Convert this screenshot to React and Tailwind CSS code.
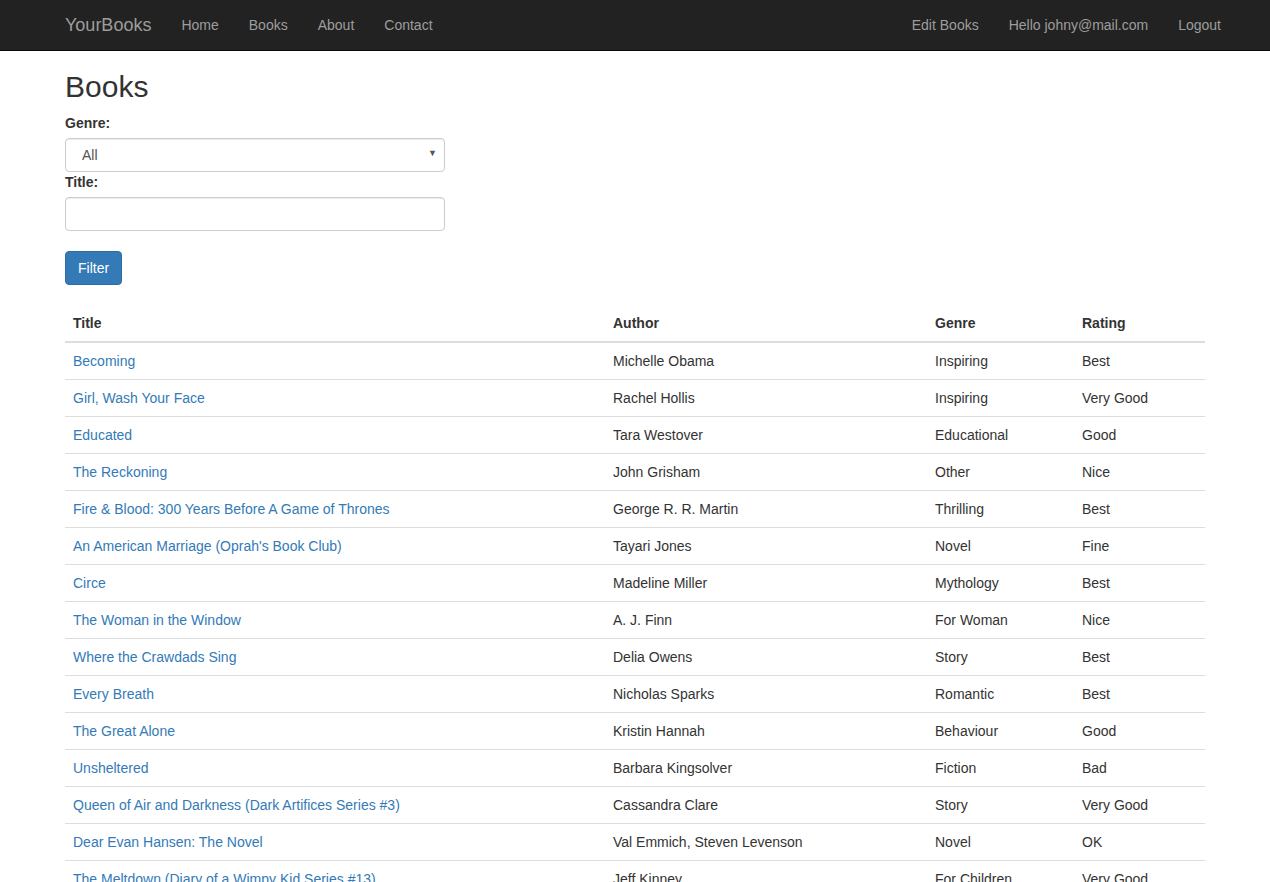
import React from 'react';

const books = [
  ['Becoming', 'Michelle Obama', 'Inspiring', 'Best'],
  ['Girl, Wash Your Face', 'Rachel Hollis', 'Inspiring', 'Very Good'],
  ['Educated', 'Tara Westover', 'Educational', 'Good'],
  ['The Reckoning', 'John Grisham', 'Other', 'Nice'],
  ['Fire & Blood: 300 Years Before A Game of Thrones', 'George R. R. Martin', 'Thrilling', 'Best'],
  ["An American Marriage (Oprah's Book Club)", 'Tayari Jones', 'Novel', 'Fine'],
  ['Circe', 'Madeline Miller', 'Mythology', 'Best'],
  ['The Woman in the Window', 'A. J. Finn', 'For Woman', 'Nice'],
  ['Where the Crawdads Sing', 'Delia Owens', 'Story', 'Best'],
  ['Every Breath', 'Nicholas Sparks', 'Romantic', 'Best'],
  ['The Great Alone', 'Kristin Hannah', 'Behaviour', 'Good'],
  ['Unsheltered', 'Barbara Kingsolver', 'Fiction', 'Bad'],
  ['Queen of Air and Darkness (Dark Artifices Series #3)', 'Cassandra Clare', 'Story', 'Very Good'],
  ['Dear Evan Hansen: The Novel', 'Val Emmich, Steven Levenson', 'Novel', 'OK'],
  ['The Meltdown (Diary of a Wimpy Kid Series #13)', 'Jeff Kinney', 'For Children', 'Very Good'],
];

function NavLink({ children }) {
  return (
    <a href="#" className="block px-[15px] py-[15px] leading-5 text-[#9d9d9d] hover:text-white">
      {children}
    </a>
  );
}

export default function App() {
  return (
    <div className="min-h-[882px] bg-white text-sm text-[#333] font-['Liberation_Sans',Arial,sans-serif]">
      <nav className="h-[51px] bg-[#222] border-b border-[#080808]">
        <div className="w-[1170px] mx-auto px-[15px] flex">
          <a href="#" className="-ml-[15px] px-[15px] py-[15px] h-[50px] text-lg leading-5 text-[#9d9d9d]">
            YourBooks
          </a>
          <ul className="flex">
            <li><NavLink>Home</NavLink></li>
            <li><NavLink>Books</NavLink></li>
            <li><NavLink>About</NavLink></li>
            <li><NavLink>Contact</NavLink></li>
          </ul>
          <ul className="flex ml-auto -mr-[31px]">
            <li><NavLink>Edit Books</NavLink></li>
            <li><NavLink>Hello johny@mail.com</NavLink></li>
            <li><NavLink>Logout</NavLink></li>
          </ul>
        </div>
      </nav>

      <div className="w-[1170px] mx-auto px-[15px]">
        <h2 className="mt-[19px] mb-[10px] text-[30px] leading-[33px] font-normal">Books</h2>

        <form onSubmit={(e) => e.preventDefault()}>
          <label className="inline-block font-bold leading-5 mb-[5px]">Genre:</label>
          <div className="relative w-[380px]">
            <select className="appearance-none w-full h-[34px] pl-[16px] pr-8 border border-[#ccc] rounded bg-white text-[#555] shadow-[inset_0_1px_1px_rgba(0,0,0,0.075)] outline-none">
              <option>All</option>
            </select>
            <span className="pointer-events-none absolute right-[8px] top-[9px] text-[9px] text-[#555]">▼</span>
          </div>
          <label className="inline-block font-bold leading-5 mb-[5px]">Title:</label>
          <input
            type="text"
            className="block w-[380px] h-[34px] px-3 border border-[#ccc] rounded bg-white text-[#555] shadow-[inset_0_1px_1px_rgba(0,0,0,0.075)] outline-none"
          />
          <button
            type="submit"
            className="mt-5 h-[34px] px-3 rounded bg-[#337ab7] border border-[#2e6da4] text-white leading-5"
          >
            Filter
          </button>
        </form>

        <table className="mt-5 w-full table-fixed border-collapse">
          <colgroup>
            <col className="w-[540px]" />
            <col className="w-[322px]" />
            <col className="w-[147px]" />
            <col className="w-[131px]" />
          </colgroup>
          <thead>
            <tr>
              <th className="p-2 text-left font-bold leading-5 border-b-2 border-[#ddd]">Title</th>
              <th className="p-2 text-left font-bold leading-5 border-b-2 border-[#ddd]">Author</th>
              <th className="p-2 text-left font-bold leading-5 border-b-2 border-[#ddd]">Genre</th>
              <th className="p-2 text-left font-bold leading-5 border-b-2 border-[#ddd]">Rating</th>
            </tr>
          </thead>
          <tbody>
            {books.map((b, i) => (
              <tr key={b[0]}>
                <td className={`p-2 leading-5 ${i > 0 ? 'border-t border-[#ddd]' : ''}`}>
                  <a href="#" className="text-[#337ab7]">{b[0]}</a>
                </td>
                <td className={`p-2 leading-5 ${i > 0 ? 'border-t border-[#ddd]' : ''}`}>{b[1]}</td>
                <td className={`p-2 leading-5 ${i > 0 ? 'border-t border-[#ddd]' : ''}`}>{b[2]}</td>
                <td className={`p-2 leading-5 ${i > 0 ? 'border-t border-[#ddd]' : ''}`}>{b[3]}</td>
              </tr>
            ))}
          </tbody>
        </table>
      </div>
    </div>
  );
}
